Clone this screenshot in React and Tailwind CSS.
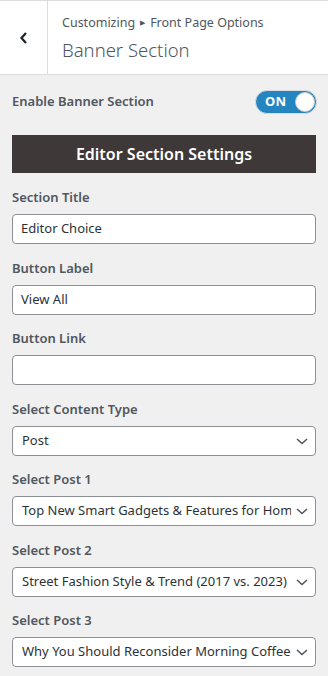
import React from 'react';

const font = { fontFamily: '"Noto Sans", "Open Sans", sans-serif' };

function Chevron() {
  return (
    <svg width="14" height="10" viewBox="0 0 14 10" className="shrink-0 text-[#50575e]">
      <path d="M2 3 L7 7.5 L12 3" fill="none" stroke="currentColor" strokeWidth="1.5" />
    </svg>
  );
}

function TextField({ label, value }) {
  return (
    <div className="mb-[14.5px]">
      <div className="text-[13px] font-semibold leading-[18px] text-[#50575e] mb-[8px]">{label}</div>
      <div className="h-[30px] bg-white border border-[#8c8f94] rounded-[4px] px-[8px] flex items-center text-[13px] text-[#2c3338]">
        {value}
      </div>
    </div>
  );
}

function SelectField({ label, value }) {
  return (
    <div className="mb-[14.5px]">
      <div className="text-[13px] font-semibold leading-[18px] text-[#50575e] mb-[8px]">{label}</div>
      <div className="h-[30px] bg-white border border-[#8c8f94] rounded-[4px] pl-[9px] pr-[6px] flex items-center gap-[4px] text-[13px] text-[#2c3338]">
        <span className="flex-1 whitespace-nowrap overflow-hidden">{value}</span>
        <Chevron />
      </div>
    </div>
  );
}

export default function App() {
  return (
    <div className="w-[328px] h-[676px] bg-[#f0f0f1] overflow-hidden" style={font}>
      <header className="h-[75px] bg-white border-t border-b border-[#dcdcde] flex">
        <button className="w-[48px] border-r border-[#dcdcde] flex items-center justify-center text-[#1d2327]">
          <svg width="12" height="16" viewBox="0 0 12 16">
            <path d="M8 3 L3.5 8 L8 13" fill="none" stroke="currentColor" strokeWidth="2.2" />
          </svg>
        </button>
        <div className="pl-[14px] pt-[12px] text-[#50575e]">
          <div className="text-[12.5px] leading-[20px] flex items-center gap-[5px]">
            <span>Customizing</span>
            <span className="text-[7px]">▶</span>
            <span>Front Page Options</span>
          </div>
          <div className="text-[18.5px] font-light leading-[28px] mt-[3px]">Banner Section</div>
        </div>
      </header>

      <div className="px-[12px] pt-[15px]">
        <div className="flex items-center justify-between">
          <span className="text-[13px] font-semibold text-[#50575e]">Enable Banner Section</span>
          <div className="w-[62px] h-[24px] rounded-full bg-[#2585c0] border border-[#d8dde2] flex items-center justify-between pl-[9px] pr-[1px] mr-[-1px]">
            <span className="text-white text-[13px] font-bold tracking-wide">ON</span>
            <span className="w-[20px] h-[20px] rounded-full bg-white border border-[#c7cbd0]" />
          </div>
        </div>

        <div className="mt-[21px] h-[38px] bg-[#3e3838] flex items-center justify-center text-white text-[16px] font-semibold">
          Editor Section Settings
        </div>

        <div className="mt-[15px]">
          <TextField label="Section Title" value="Editor Choice" />
          <TextField label="Button Label" value="View All" />
          <TextField label="Button Link" value="" />
          <SelectField label="Select Content Type" value="Post" />
          <SelectField label="Select Post 1" value="Top New Smart Gadgets & Features for Home" />
          <SelectField label="Select Post 2" value="Street Fashion Style & Trend (2017 vs. 2023)" />
          <SelectField label="Select Post 3" value="Why You Should Reconsider Morning Coffee" />
        </div>
      </div>
    </div>
  );
}
